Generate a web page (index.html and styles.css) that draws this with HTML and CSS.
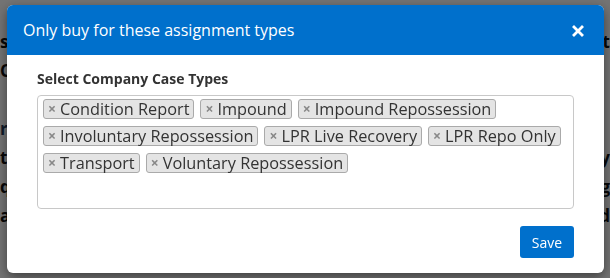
FILE: index.html
```html
<!DOCTYPE html>
<html lang="en">
    <head>
        <meta charset="UTF-8">
        <title>Assignment types</title>
        <link rel="stylesheet" href="styles.css">
    </head>
    <body>
        <div class="page">
            <div class="pageRow"><span>s</span><span>t</span></div>
            <div class="pageRow"><span>C</span><span></span></div>
            <div class="pageRow"><span></span><span></span></div>
            <div class="pageRow light"><span>r</span><span></span></div>
            <div class="pageRow"><span>t</span><span>y</span></div>
            <div class="pageRow"><span>q</span><span>g</span></div>
            <div class="pageRow"><span>a</span><span>d</span></div>
        </div>

        <div class="overlay">
            <div class="modal">
                <div class="modalHeader">
                    <span class="modalTitle">Only buy for these assignment types</span>
                    <svg class="closeIcon" width="12" height="12" viewBox="0 0 12 12">
                        <path d="M2 2 L10 10 M10 2 L2 10" stroke="#fff" stroke-width="2.8" stroke-linecap="square" />
                    </svg>
                </div>
                <div class="modalBody">
                    <div class="fieldLabel">Select Company Case Types</div>
                    <div class="tagBox">
                        <span class="tag"><b>×</b>Condition Report</span>
                        <span class="tag"><b>×</b>Impound</span>
                        <span class="tag"><b>×</b>Impound Repossession</span>
                        <span class="tag"><b>×</b>Involuntary Repossession</span>
                        <span class="tag"><b>×</b>LPR Live Recovery</span>
                        <span class="tag"><b>×</b>LPR Repo Only</span>
                        <span class="tag"><b>×</b>Transport</span>
                        <span class="tag"><b>×</b>Voluntary Repossession</span>
                    </div>
                    <div class="actions">
                        <button class="saveBtn">Save</button>
                    </div>
                </div>
            </div>
        </div>
    </body>
</html>
```

FILE: styles.css
```css
body {
    margin: 0;
    font-family: "Open Sans", Arial, sans-serif;
    background-color: #fff;
    overflow: hidden;
}

.page {
    padding-top: 30px;
}

.pageRow {
    display: flex;
    justify-content: space-between;
    height: 29px;
    font-size: 17px;
    font-weight: bold;
    color: #111;
}

.pageRow.light {
    color: #233a5a;
}

.overlay {
    position: fixed;
    top: 0;
    left: 0;
    right: 0;
    bottom: 0;
    background-color: rgba(0, 0, 0, 0.55);
    padding: 5px 6px 0 7px;
}

.modal {
    background-color: #fff;
    border-radius: 6px;
    height: 268px;
    box-shadow: 0 4px 12px rgba(0, 0, 0, 0.45);
    overflow: hidden;
}

.modalHeader {
    display: flex;
    align-items: center;
    justify-content: space-between;
    height: 50px;
    padding: 0 20px 0 16px;
    background-color: #0070cc;
}

.modalTitle {
    color: #fff;
    font-size: 16px;
}

.closeIcon {
    margin-top: 2px;
}

.modalBody {
    padding: 14px 30px 0 30px;
}

.fieldLabel {
    font-size: 14px;
    font-weight: bold;
    color: #333;
    line-height: 19px;
    margin-bottom: 7px;
}

.tagBox {
    display: flex;
    flex-wrap: wrap;
    align-content: flex-start;
    gap: 7px 6px;
    height: 106px;
    padding: 3px 5px;
    border: 1px solid #c8c8c8;
    border-radius: 4px;
}

.tag {
    font-size: 16.3px;
    line-height: 18px;
    height: 18px;
    color: #333;
    background-color: #e4e4e4;
    border: 1px solid #aaa;
    border-radius: 3px;
    padding: 0 4px 0 3px;
}

.tag b {
    display: inline-block;
    line-height: 18px;
    vertical-align: top;
    color: #888;
    font-size: 14px;
    margin: 0 4px 0 1px;
}

.actions {
    display: flex;
    justify-content: flex-end;
    margin-top: 17px;
}

.saveBtn {
    font-family: "Open Sans", Arial, sans-serif;
    font-size: 14px;
    color: #fff;
    background-color: #0070cc;
    border: none;
    border-radius: 3px;
    width: 54px;
    height: 32px;
}
```
